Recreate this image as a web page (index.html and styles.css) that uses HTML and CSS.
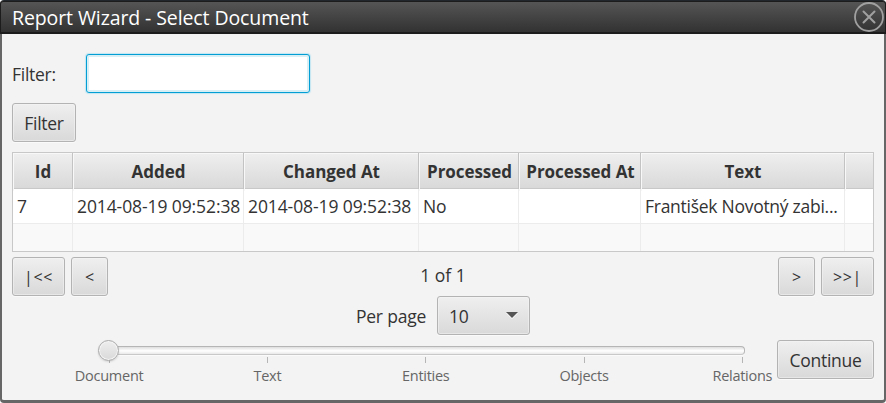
FILE: index.html
```html
<!DOCTYPE html>
<html lang="en">
<head>
<meta charset="utf-8">
<title>Report Wizard</title>
<link rel="stylesheet" href="styles.css">
</head>
<body>
<div class="window">
  <header class="titlebar">
    <h1 class="title">Report Wizard - Select Document</h1>
    <svg class="close" width="30" height="30" viewBox="0 0 30 30" fill="none" stroke="#a0a0a0"><circle cx="15" cy="15" r="14" stroke-width="1.8"/><path d="M9.5 9.5 20.5 20.5M20.5 9.5 9.5 20.5" stroke-width="2" stroke-linecap="round"/></svg>
  </header>
  <main class="content">
    <div class="filter-row">
      <label class="filter-label" for="filter">Filter:</label>
      <input class="filter-input" id="filter" type="text">
    </div>
    <button class="button filter-button">Filter</button>
    <div class="table">
      <div class="row head">
        <div class="cell">Id</div><div class="cell">Added</div><div class="cell">Changed At</div><div class="cell wide-head">Processed</div><div class="cell wide-head">Processed At</div><div class="cell">Text</div><div class="cell"></div>
      </div>
      <div class="row first">
        <div class="cell">7</div><div class="cell date">2014-08-19 09:52:38</div><div class="cell date">2014-08-19 09:52:38</div><div class="cell">No</div><div class="cell"></div><div class="cell person">František Novotný zabi...</div><div class="cell"></div>
      </div>
      <div class="row empty">
        <div class="cell"></div><div class="cell"></div><div class="cell"></div><div class="cell"></div><div class="cell"></div><div class="cell"></div><div class="cell"></div>
      </div>
    </div>
    <div class="pager">
      <div class="group"><button class="button wide">|&lt;&lt;</button><button class="button narrow">&lt;</button></div>
      <span class="page">1 of 1</span>
      <div class="group"><button class="button narrow">&gt;</button><button class="button wide">&gt;&gt;|</button></div>
    </div>
    <div class="per-page">
      <span class="per-label">Per page</span>
      <button class="button combo"><span>10</span><svg width="12" height="7" viewBox="0 0 12 7"><path d="M0 1 6 7 12 1Z" fill="#fff"/><path d="M0 0H12L6 6Z" fill="#555"/></svg></button>
    </div>
    <div class="footer">
      <div class="slider">
        <div class="track"><div class="thumb"></div></div>
        <div class="steps">
          <div class="step">Document</div><div class="step">Text</div><div class="step">Entities</div><div class="step">Objects</div><div class="step">Relations</div>
        </div>
      </div>
      <button class="button continue">Continue</button>
    </div>
  </main>
</div>
</body>
</html>
```

FILE: styles.css
```css
* { box-sizing: border-box; }
body {
  margin: 0;
  background: #fff;
  color: #333;
  font: 400 17.5px/24px "Open Sans", "Noto Sans", sans-serif;
  letter-spacing: -.27px;
}
.window {
  width: 886px;
  height: 403px;
  border: 2px solid #666;
  border-top: 1px solid #20262b;
  border-bottom-width: 3px;
  border-radius: 4px;
  background: #f3f3f3;
}
.titlebar {
  display: flex;
  justify-content: space-between;
  height: 33px;
  margin: 0 -2px;
  padding: 1px 1px 0 11px;
  border: 1px solid #1c1c1c;
  border-width: 1px 1px 2px;
  border-radius: 3px 3px 0 0;
  background: linear-gradient(#555, #323232);
}
.title {
  margin: 0;
  color: #fff;
  font-size: 19.5px;
  font-weight: 400;
  letter-spacing: -.1px;
  line-height: 30px;
}
.close { margin-top: -1px; }
.content { padding: 20px 10px 0; }
.filter-row { display: flex; align-items: center; height: 39px; }
.filter-label { width: 74px; }
.filter-input {
  width: 224px;
  height: 39px;
  border: 1px solid #039ed3;
  border-radius: 3px;
  outline: none;
  background: #fff;
  box-shadow: 0 0 1px 1px #c3e6f2, inset 0 0 0 2px #d9eff6;
}
.button {
  display: block;
  height: 39px;
  padding: 0;
  border: 1px solid #b3b3b3;
  border-radius: 3px;
  background: linear-gradient(#efefef, #d9d9d9);
  box-shadow: inset 0 0 0 1px #f6f6f680, 0 1px #fafafa;
  color: #333;
  font: inherit;
  line-height: 22px;
  letter-spacing: inherit;
}
.filter-button { width: 64px; margin-top: 10px; }
.table {
  height: 100px;
  margin-top: 10px;
  border: 1px solid #c8c8c8;
}
.row { display: grid; grid-template-columns: 60px 171px 175px 100px 122px 204px 28px; }
.cell { padding-left: 4px; border-right: 1px solid #ececec; white-space: nowrap; }
.cell:last-child { border-right: 0; }
.head { height: 36px; border-bottom: 1px solid #c8c8c8; background: linear-gradient(#efefef, #d9d9d9); }
.head .cell {
  padding: 0 0 0 1px;
  border-color: #c3c3c3;
  box-shadow: inset 1px 1px #f8f8f8;
  font-size: 17px;
  font-weight: 700;
  letter-spacing: -.05px;
  line-height: 38px;
  text-align: center;
}
.head .wide-head { padding-left: 2px; }
.first { height: 35px; border-bottom: 1px solid #ececec; background: #fff; }
.first .cell { line-height: 35px; }
.first .date { letter-spacing: -.1px; }
.empty { height: 27px; background: #f9f9f9; }
.pager { display: flex; justify-content: space-between; margin-top: 5px; height: 39px; }
.group { display: flex; gap: 6px; }
.wide { width: 53px; font-size: 16px; letter-spacing: .7px; }
.narrow { width: 37px; font-size: 16px; }
.page { line-height: 36px; letter-spacing: 0; }
.per-page { display: flex; align-items: center; justify-content: center; gap: 11px; height: 39px; }
.per-label { line-height: 22px; letter-spacing: -.2px; }
.combo { display: flex; align-items: center; justify-content: space-between; width: 93px; padding: 0 11px; }
.footer { display: flex; justify-content: space-between; height: 44px; padding: 5px 0 0 56px; }
.slider { width: 704px; }
.track {
  position: relative;
  width: 644px;
  height: 9px;
  margin: 6px 0 0 33px;
  border: 1px solid #b5b5b5;
  border-bottom-color: #c8c8c8;
  border-radius: 4px;
  background: linear-gradient(#dedede, #fff 55%, #e8e8e8);
  box-shadow: 0 1px #fafafa;
}
.thumb {
  position: absolute;
  left: -4px;
  top: -7px;
  width: 21px;
  height: 21px;
  border: 1px solid #aaa;
  border-radius: 50%;
  background: linear-gradient(#eee, #d9d9d9);
  box-shadow: inset 0 0 0 1px #f5f5f5, 0 1px 2px #0002;
}
.steps { display: grid; grid-template-columns: repeat(5, 158.3px); width: 792px; margin: 2px 0 0 -38px; }
.step { color: #666; font-size: 14.5px; line-height: 26px; text-align: center; }
.step::before { content: ""; display: block; width: 1px; height: 6px; margin: 0 auto; background: #b5b5b5; }
.continue { width: 97px; }
```
